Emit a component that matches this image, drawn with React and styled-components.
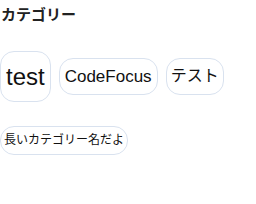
import React from "react";
import styled, { createGlobalStyle } from "styled-components";

const Global = createGlobalStyle`
  html, body { margin: 0; padding: 0; background: #ffffff; }
  body { font-family: "Liberation Sans", "Noto Sans CJK JP", Arial, sans-serif; color: #111111; }
`;

const Section = styled.section`
  display: flex;
  flex-direction: column;
  padding: 0;
`;

const Title = styled.h3`
  margin: 3px 0 0 1px;
  font-size: 15px;
  line-height: 23px;
  font-weight: 700;
  color: #222222;
`;

const ChipList = styled.div`
  display: flex;
  flex-wrap: wrap;
  align-items: center;
  column-gap: 8px;
  row-gap: 24px;
  margin-top: 25px;
`;

const Chip = styled.span`
  display: inline-flex;
  align-items: center;
  justify-content: center;
  box-sizing: border-box;
  border: 1px solid #d9e2ef;
  border-radius: 14px;
  background: #ffffff;
  color: #111111;
  font-size: ${(p) => p.$size}px;
  line-height: 1.15;
  height: ${(p) => p.$h}px;
  padding: 0 ${(p) => p.$px}px;
  white-space: nowrap;
`;

const tags = [
  { name: "test", size: 24, h: 51, px: 5 },
  { name: "CodeFocus", size: 17, h: 37, px: 5 },
  { name: "テスト", size: 16, h: 37, px: 4 },
  { name: "長いカテゴリー名だよ", size: 12, h: 29, px: 3 },
];

export default function App() {
  return (
    <>
      <Global />
      <Section>
        <Title>カテゴリー</Title>
        <ChipList>
          {tags.map((t) => (
            <Chip key={t.name} $size={t.size} $h={t.h} $px={t.px}>
              {t.name}
            </Chip>
          ))}
        </ChipList>
      </Section>
    </>
  );
}
